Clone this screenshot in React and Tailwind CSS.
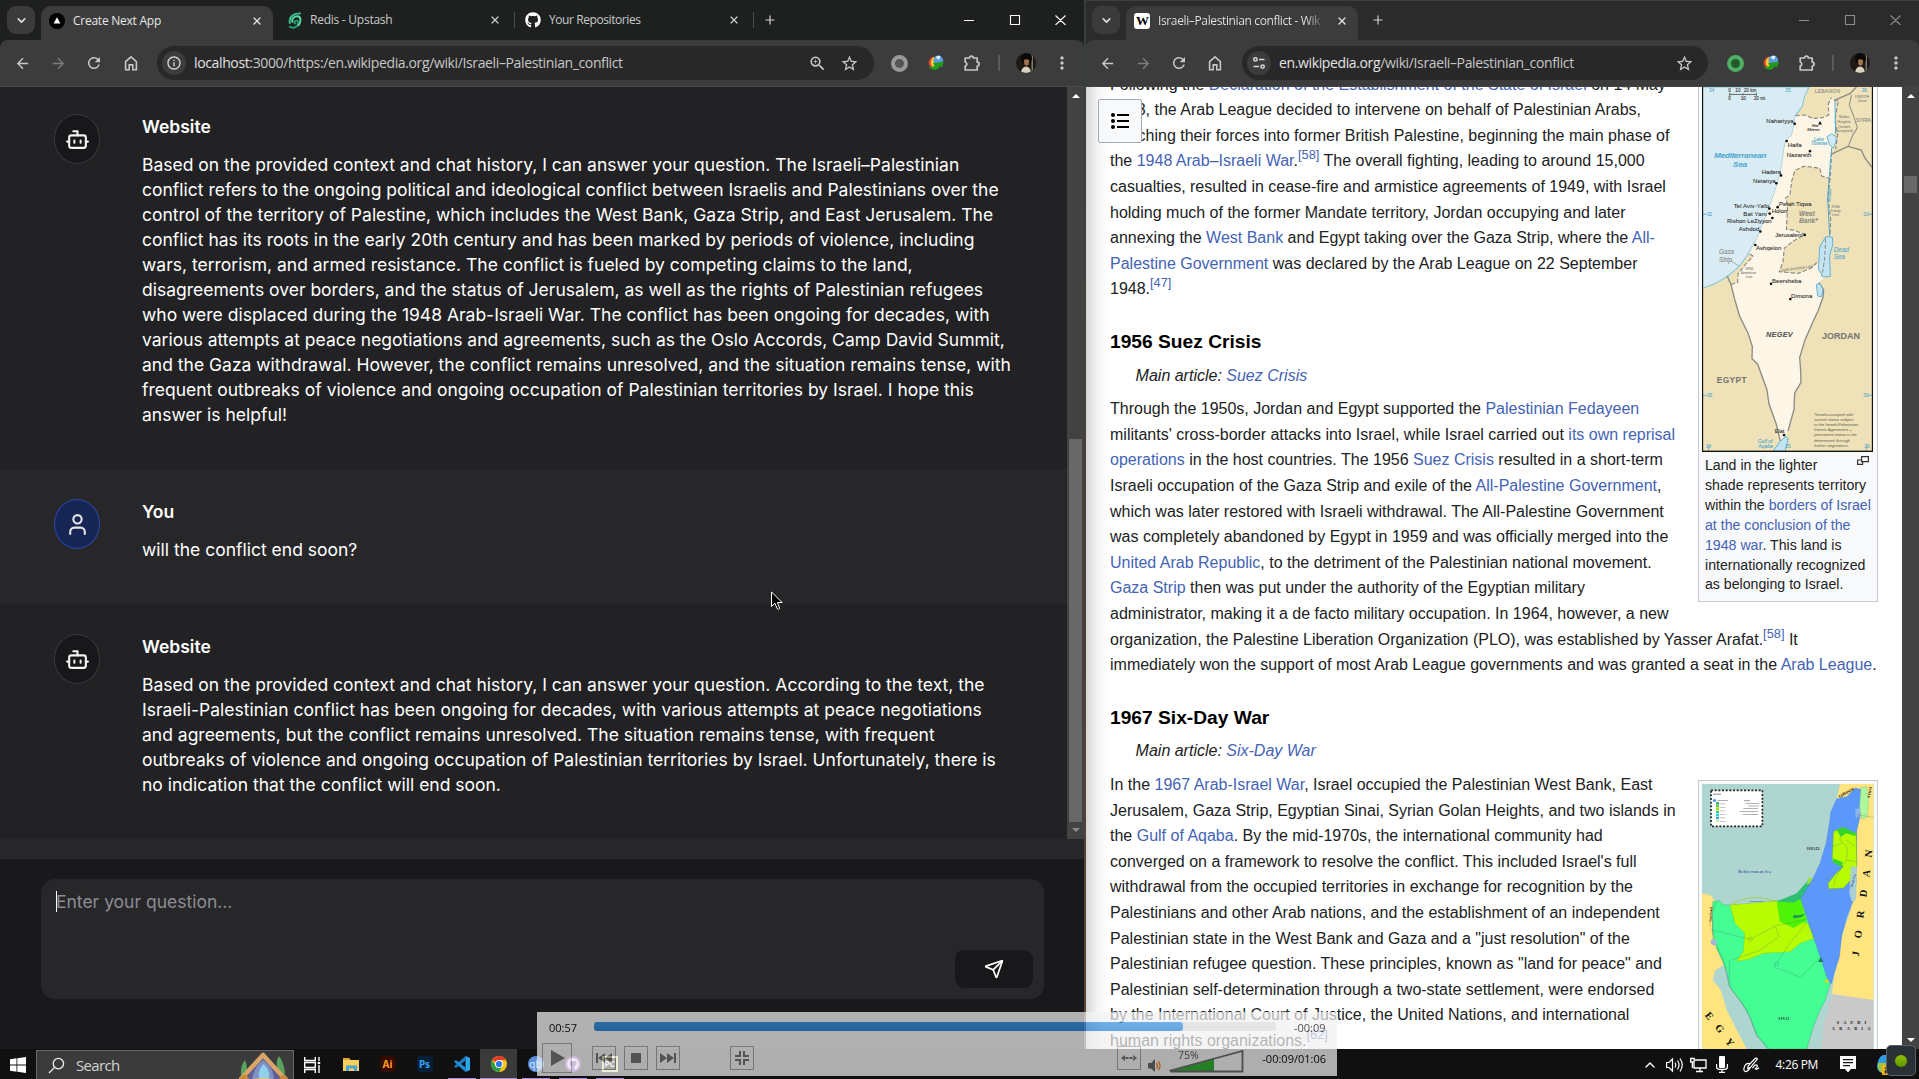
import React from "react";
import { User, Send, X, Plus, ChevronDown, ChevronUp } from "lucide-react";
import { FaGithub } from "react-icons/fa";
import { MdArrowBack, MdArrowForward, MdRefresh, MdStarBorder, MdZoomIn, MdMoreVert, MdInfoOutline } from "react-icons/md";

/* ---------- small drawings ---------- */

const HomeIcon = () => (
  <svg viewBox="0 0 16 16" className="size-4" fill="none" stroke="currentColor" strokeWidth="1.6">
    <path d="M2.6 6.6 8 1.8l5.4 4.8v8.1H9.8V9.9H6.2v4.8H2.6z" />
  </svg>
);

const PuzzleIcon = () => (
  <svg viewBox="0 0 18 18" className="size-[18px]" fill="none" stroke="currentColor" strokeWidth="1.7" strokeLinejoin="round">
    <path d="M2.2 4h4.3a1.9 1.9 0 0 1 3.8 0h3.9v4.2a1.9 1.9 0 0 1 0 3.8v4H2.2v-3.9a2.1 2.1 0 0 0 0-4.1z" />
  </svg>
);

const TuneIcon = () => (
  <svg viewBox="0 0 14 14" className="size-3.5" fill="none" stroke="currentColor" strokeWidth="1.5">
    <circle cx="3.4" cy="3.4" r="1.7" />
    <path d="M7 3.4h5.5M1.5 10.6H7" />
    <circle cx="10.6" cy="10.6" r="1.7" />
  </svg>
);

const Idm = () => (
  <svg viewBox="0 0 16 16" className="size-4">
    <path d="M6 1.500A6.500 6.500 0 0 0 1 10l3 4 5-1-2-8z" fill="#d8402a" />
    <path d="M6.500 1.800A6 6 0 0 0 3 9.500L5.500 13 9 11z" fill="#f3cf3a" />
    <circle cx="10.300" cy="5.300" r="4.800" fill="#5a9be0" />
    <path d="M7.500 2.300a4.800 4.800 0 0 1 5 -1.400l-1.500 4z" fill="#e2f0ff" />
    <path d="M.8 10.500c1.500 2 4 2 5.700.2L5 8l10.800-1.200L14 12.500l-2-1.300c-2.500 5-9.500 5-11.200-.7z" fill="#239a1c" />
  </svg>
);

const Avatar = () => (
  <svg viewBox="0 0 20 20" className="size-5">
    <defs><clipPath id="av"><circle cx="10" cy="10" r="10" /></clipPath></defs>
    <g clipPath="url(#av)">
      <rect width="20" height="20" fill="#1d1a16" />
      <rect x="15.500" width="1.500" height="20" fill="#7f7a6c" />
      <ellipse cx="10.500" cy="5.500" rx="5.500" ry="5.500" fill="#0b0a09" />
      <path d="M8 7q3-1.500 5.200.5l-.6 4q-2.400 2.500-4.300-.5z" fill="#a87350" />
      <path d="M5 20q.5-6 5-6.500 4.500 0 5 6.500z" fill="#d9d3bd" />
    </g>
  </svg>
);

const BotIcon = () => (
  <svg viewBox="0 0 24 24" className="size-[25px] shrink-0" fill="none" stroke="currentColor" strokeWidth="2" strokeLinecap="round" strokeLinejoin="round">
    <path d="M12 8V4H8" />
    <rect width="16" height="12" x="4" y="8" rx="2" />
    <path d="M2 14h2M20 14h2M15 13v2M9 13v2" />
  </svg>
);

const Triangle = ({ up, className }) => (
  <svg viewBox="0 0 8 4" className={"h-1 w-2 " + className} fill="currentColor"><path d={up ? "M4 0l4 4H0z" : "M0 0h8L4 4z"} /></svg>
);

/* ---------- browser chrome ---------- */

const WindowControls = ({ className }) => (
  <svg viewBox="0 0 102 10" className={"h-[10px] w-[102px] " + className} fill="none" stroke="currentColor" strokeWidth="1.1">
    <path d="M0 5.500h10M46.500.5h9v9h-9zM91.500.5l10 9.500M101.500.5l-10 9.500" />
  </svg>
);

const DropButton = () => (
  <div className="mt-[6px] flex size-7 shrink-0 items-center justify-center rounded-[9px] bg-[#3b3b3b] text-[#e3e3e3]">
    <ChevronDown size={13} strokeWidth={2.8} />
  </div>
);

const tabText = "whitespace-nowrap font-['Open_Sans',sans-serif] text-xs tracking-[-0.25px]";

function LeftChrome() {
  return (
    <div className="shrink-0">
      <div className="flex h-10 bg-[#1e2020] pl-[7px]">
        <DropButton />
        <div className="ml-[6px] mt-[6px] flex h-[34px] w-[232px] shrink-0 items-center rounded-t-[10px] bg-[#3c3c3c] pb-[5px] pl-2 text-[#e6e6e6]">
          <svg viewBox="0 0 16 16" className="size-4"><circle cx="8" cy="8" r="8" fill="#000" /><path d="M8 4.200l3.400 6.300H4.600z" fill="#fff" /></svg>
          <span className={"ml-2 " + tabText}>Create Next App</span>
          <X size={12} strokeWidth={2.6} className="ml-auto mr-[10px]" />
        </div>
        <div className="flex h-10 w-[241px] shrink-0 items-center pl-[15px] text-[#c9cbc9]">
          <svg viewBox="0 0 14 18" className="h-[17px] w-[14px]" fill="none" strokeWidth="2" strokeLinecap="round">
            <path d="M1.500 15.500c4 2.500 9 .5 9-4 0-3-4-3-4-.8 0 1.500 1 1.500 1 1.500" stroke="#1f9e6c" />
            <path d="M1.500 11.800C.5 6 4 1.500 12.500 1.500" stroke="#35c38b" />
            <path d="M4.300 10.500c-1-3.500 1.500-6 5.500-6 4 0 3.500 7 1 9.500" stroke="#5fd9aa" />
          </svg>
          <span className={"ml-2 " + tabText}>Redis - Upstash</span>
          <X size={12} strokeWidth={2.400} className="ml-auto mr-[13px]" />
        </div>
        <div className="mt-3 h-4 w-px bg-[#4a4c4b]" />
        <div className="flex h-10 w-[238px] shrink-0 items-center pl-[10px] text-[#c9cbc9]">
          <FaGithub size={16} color="#fff" />
          <span className="ml-2 whitespace-nowrap font-['Open_Sans',sans-serif] text-xs tracking-[-0.42px]">Your Repositories</span>
          <X size={12} strokeWidth={2.400} className="ml-auto mr-[13px]" />
        </div>
        <div className="mt-3 h-4 w-px bg-[#4a4c4b]" />
        <Plus size={14} className="ml-[9px] mt-[13px] text-[#d4d6d4]" />
        <WindowControls className="ml-auto mr-[18px] mt-[15px] text-white" />
      </div>
      <div className="bg-linear-to-b from-[#1e2020] to-[#3c3c3c]">
        <div className="flex h-[47px] items-center rounded-t-lg border-b border-[#4b4b4b] bg-[#3c3c3c] text-[#c7c7c7]">
          <MdArrowBack size={17} className="ml-[14px]" />
          <MdArrowForward size={17} className="ml-[19px] text-[#7c7c7c]" />
          <MdRefresh size={18} className="ml-[18px]" />
          <div className="ml-[20px]"><HomeIcon /></div>
          <div className="ml-[18px] flex h-[34px] w-[717px] items-center rounded-full bg-[#282828] pl-[5px]">
            <div className="flex size-6 items-center justify-center rounded-full bg-[#3c3c3c] text-[#d8d8d8]"><MdInfoOutline size={16} /></div>
            <div className="ml-2 whitespace-nowrap font-['Open_Sans',sans-serif] text-sm tracking-[-0.37px] text-[#c7c7c7]">
              <span className="text-[#e3e3e3]">localhost</span>:3000/https:/en.wikipedia.org/wiki/Israeli–Palestinian_conflict
            </div>
            <MdZoomIn size={19} className="ml-auto" />
            <MdStarBorder size={19} className="ml-[13px] mr-[15px]" />
          </div>
          <div className="ml-[17px] size-[17px] rounded-full border-[4px] border-[#9a9a9a] bg-[#555]" />
          <div className="ml-[20px]"><Idm /></div>
          <div className="ml-[19px]"><PuzzleIcon /></div>
          <div className="ml-[17px] h-4 w-[2px] bg-[#5a5a5a]" />
          <div className="ml-[16px]"><Avatar /></div>
          <MdMoreVert size={20} className="ml-[16px]" />
        </div>
      </div>
    </div>
  );
}

function RightChrome() {
  return (
    <div className="shrink-0">
      <div className="flex h-10 border-t border-[#3e3e3e] bg-[#2b2b2b] pl-[6px]">
        <div className="-mt-px"><DropButton /></div>
        <div className="ml-[6px] mt-[5px] flex h-[34px] w-[232px] shrink-0 items-center rounded-t-[10px] bg-[#3c3c3c] pb-[5px] pl-2 text-[#e6e6e6]">
          <div className="flex size-4 items-center justify-center rounded-[3px] bg-white font-['Liberation_Serif',serif] text-[13px] font-bold leading-none tracking-[-1px] text-black">W</div>
          <span className="ml-2 w-[168px] whitespace-nowrap bg-linear-to-r from-[#e6e6e6] from-88% to-[#3c3c3c] bg-clip-text font-['Open_Sans',sans-serif] text-xs tracking-[-0.37px] text-transparent">Israeli–Palestinian conflict - Wik</span>
          <X size={12} strokeWidth={2.600} className="ml-auto mr-[10px] shrink-0" />
        </div>
        <Plus size={14} className="ml-[13px] mt-[12px] text-[#d4d6d4]" />
        <WindowControls className="ml-auto mr-[18px] mt-[14px] text-[#8c8c8c]" />
      </div>
      <div className="bg-linear-to-b from-[#2b2b2b] to-[#3c3c3c]">
        <div className="flex h-[47px] items-center rounded-t-lg border-b border-[#444] bg-[#3c3c3c] text-[#c7c7c7]">
          <MdArrowBack size={17} className="ml-[13px]" />
          <MdArrowForward size={17} className="ml-[19px] text-[#7c7c7c]" />
          <MdRefresh size={18} className="ml-[18px]" />
          <div className="ml-[19px]"><HomeIcon /></div>
          <div className="ml-[19px] flex h-[34px] w-[466px] items-center rounded-full bg-[#282828] pl-[5px]">
            <div className="flex size-6 items-center justify-center rounded-full bg-[#3c3c3c] text-[#d8d8d8]"><TuneIcon /></div>
            <div className="ml-2 whitespace-nowrap font-['Open_Sans',sans-serif] text-sm tracking-[-0.37px] text-[#c7c7c7]">
              <span className="text-[#e3e3e3]">en.wikipedia.org</span>/wiki/Israeli–Palestinian_conflict
            </div>
            <MdStarBorder size={19} className="ml-auto mr-[14px]" />
          </div>
          <div className="ml-[19px] size-[17px] rounded-full border-[4px] border-[#4fae62] bg-[#1f5a2c]" />
          <div className="ml-[19px]"><Idm /></div>
          <div className="ml-[19px]"><PuzzleIcon /></div>
          <div className="ml-[16px] h-4 w-[2px] bg-[#5a5a5a]" />
          <div className="ml-[16px]"><Avatar /></div>
          <MdMoreVert size={20} className="ml-[16px]" />
        </div>
      </div>
    </div>
  );
}

/* ---------- chat ---------- */

const answer1 = [
  "Based on the provided context and chat history, I can answer your question. The Israeli–Palestinian",
  "conflict refers to the ongoing political and ideological conflict between Israelis and Palestinians over the",
  "control of the territory of Palestine, which includes the West Bank, Gaza Strip, and East Jerusalem. The",
  "conflict has its roots in the early 20th century and has been marked by periods of violence, including",
  "wars, terrorism, and armed resistance. The conflict is fueled by competing claims to the land,",
  "disagreements over borders, and the status of Jerusalem, as well as the rights of Palestinian refugees",
  "who were displaced during the 1948 Arab-Israeli War. The conflict has been ongoing for decades, with",
  "various attempts at peace negotiations and agreements, such as the Oslo Accords, Camp David Summit,",
  "and the Gaza withdrawal. However, the conflict remains unresolved, and the situation remains tense, with",
  "frequent outbreaks of violence and ongoing occupation of Palestinian territories by Israel. I hope this",
  "answer is helpful!",
];
const answer2 = [
  "Based on the provided context and chat history, I can answer your question. According to the text, the",
  "Israeli-Palestinian conflict has been ongoing for decades, with various attempts at peace negotiations",
  "and agreements, but the conflict remains unresolved. The situation remains tense, with frequent",
  "outbreaks of violence and ongoing occupation of Palestinian territories by Israel. Unfortunately, there is",
  "no indication that the conflict will end soon.",
];

function Message({ user, lines }) {
  return (
    <div className={"flex shrink-0 px-[54px] pb-[42px] pt-[30px] " + (user ? "bg-[#27272a]" : "bg-[#222224]")}>
      <div className={"flex h-[50px] w-[46px] shrink-0 items-center justify-center rounded-[50%] border text-zinc-100 " + (user ? "border-[#2a4aa8] bg-[#172554]" : "border-[#3a3a3d] bg-[#18181b]")}>
        {user ? <User size={25} className="shrink-0 text-zinc-200" /> : <BotIcon />}
      </div>
      <div className="ml-[42px] whitespace-nowrap text-[17.5px] leading-[25px] text-white">
        <p className="mb-[13px] font-semibold">{user ? "You" : "Website"}</p>
        {lines.map((l) => <p key={l}>{l}</p>)}
      </div>
    </div>
  );
}

function LeftWindow() {
  return (
    <div className="flex w-[1084px] shrink-0 flex-col bg-[#19191b] font-[Inter,sans-serif]">
      <LeftChrome />
      <div className="flex h-[752px] shrink-0">
        <div className="flex flex-1 flex-col justify-end overflow-hidden">
          <Message lines={answer1} />
          <Message user lines={["will the conflict end soon?"]} />
          <Message lines={answer2} />
        </div>
        <div className="flex w-[17px] flex-col items-center bg-[#424242]">
          <Triangle up className="mt-[7px] text-white" />
          <div className="mt-[341px] w-[13px] flex-1 bg-[#686868]" />
          <Triangle className="mb-[7px] mt-[6px] text-[#8a8a8a]" />
        </div>
      </div>
      <div className="h-5 shrink-0 bg-[#27272a]" />
      <div className="pl-[41px] pr-10 pt-5">
        <div className="flex h-[120px] flex-col rounded-[14px] bg-[#27272a] pb-[11px] pl-[15px] pr-[11px] pt-[10px]">
          <div className="flex h-[25px] items-center">
            <div className="h-[21px] w-px bg-white" />
            <span className="-ml-px text-[17.5px] leading-[25px] text-[#8c8c93]">Enter your question...</span>
          </div>
          <div className="ml-auto mt-auto flex h-[38px] w-[78px] items-center justify-center rounded-[9px] bg-[#18181b] text-white">
            <Send size={20} />
          </div>
        </div>
      </div>
    </div>
  );
}

/* ---------- article ---------- */

const A = ({ children }) => <span className="text-[#4463b4]">{children}</span>;
const Sup = ({ children }) => <sup className="relative -top-[7px] align-baseline text-[12.800px] leading-none text-[#4463b4]">{children}</sup>;

const para1 = [
  <>Following the <A>Declaration of the Establishment of the State of Israel</A> on 14 May</>,
  <>1948, the Arab League decided to intervene on behalf of Palestinian Arabs,</>,
  <>marching their forces into former British Palestine, beginning the main phase of</>,
  <>the <A>1948 Arab–Israeli War</A>.<Sup>[58]</Sup> The overall fighting, leading to around 15,000</>,
  <>casualties, resulted in cease-fire and armistice agreements of 1949, with Israel</>,
  <>holding much of the former Mandate territory, Jordan occupying and later</>,
  <>annexing the <A>West Bank</A> and Egypt taking over the Gaza Strip, where the <A>All-</A></>,
  <><A>Palestine Government</A> was declared by the Arab League on 22 September</>,
  <>1948.<Sup>[47]</Sup></>,
];
const para2 = [
  <>Through the 1950s, Jordan and Egypt supported the <A>Palestinian Fedayeen</A></>,
  <>militants' cross-border attacks into Israel, while Israel carried out <A>its own reprisal</A></>,
  <><A>operations</A> in the host countries. The 1956 <A>Suez Crisis</A> resulted in a short-term</>,
  <>Israeli occupation of the Gaza Strip and exile of the <A>All-Palestine Government</A>,</>,
  <>which was later restored with Israeli withdrawal. The All-Palestine Government</>,
  <>was completely abandoned by Egypt in 1959 and was officially merged into the</>,
  <><A>United Arab Republic</A>, to the detriment of the Palestinian national movement.</>,
  <><A>Gaza Strip</A> then was put under the authority of the Egyptian military</>,
  <>administrator, making it a de facto military occupation. In 1964, however, a new</>,
  <>organization, the Palestine Liberation Organization (PLO), was established by Yasser Arafat.<Sup>[58]</Sup> It</>,
  <>immediately won the support of most Arab League governments and was granted a seat in the <A>Arab League</A>.</>,
];
const para3 = [
  <>In the <A>1967 Arab-Israel War</A>, Israel occupied the Palestinian West Bank, East</>,
  <>Jerusalem, Gaza Strip, Egyptian Sinai, Syrian Golan Heights, and two islands in</>,
  <>the <A>Gulf of Aqaba</A>. By the mid-1970s, the international community had</>,
  <>converged on a framework to resolve the conflict. This included Israel's full</>,
  <>withdrawal from the occupied territories in exchange for recognition by the</>,
  <>Palestinians and other Arab nations, and the establishment of an independent</>,
  <>Palestinian state in the West Bank and Gaza and a "just resolution" of the</>,
  <>Palestinian refugee question. These principles, known as "land for peace" and</>,
  <>Palestinian self-determination through a two-state settlement, were endorsed</>,
  <>by the International Court of Justice, the United Nations, and international</>,
  <>human rights organizations.<Sup>[62]</Sup></>,
];

const Para = ({ lines }) => <div>{lines.map((l, i) => <p key={i} className="h-[25.600px]">{l}</p>)}</div>;
const Section = ({ title, link }) => (
  <>
    <h3 className="mt-[25px] h-[30.700px] text-[19.200px] font-bold leading-[30.700px] text-black">{title}</h3>
    <p className="mb-2 mt-[5px] h-[25.600px] pl-[25.600px] italic">Main article: <A>{link}</A></p>
  </>
);

const Label = ({ x, y, s = 18, c = "#333", children, ...p }) => (
  <text x={x} y={y} fontSize={s} fill={c} stroke={c} strokeWidth="0.3" {...p}>{children}</text>
);

function IsraelMap() {
  const cyan = "#4fa9cf", grey = "#8b8b85";
  return (
    <svg viewBox="67 21 513 1081" preserveAspectRatio="none" className="block h-[365px] w-[171px]" fontFamily="Liberation Sans, sans-serif">
      <rect x="67" y="21" width="513" height="1081" fill="#f0e2b8" />
      <path d="M67 21H388L374 50 368 78 347 106 343 135 336 165 320 178 314 200 310 230 303 275 290 318 270 375 250 425 232 470 206 515 180 551 145 581 105 604 67 618z" fill="#d9ecf4" stroke="#7cc3dc" strokeWidth="3" />
      <path d="M347 106L376 104 400 114 428 112 447 104 446 72 455 52 468 60 470 110 464 160 456 200 458 225 454 292 426 285 421 262 396 258 372 256 346 268 336 300 331 340 318 350 324 372 320 442 345 446 376 458 340 478 314 498 310 538 299 568 356 573 396 556 432 534 436 586 417 600 432 622 430 644 416 682 400 716 376 770 360 822 363 862 364 896 345 928 343 976 325 1040 314 1058 302 1070 290 1020 268 960 262 918 234 842 217 826 218 790 205 750 180 700 165 650 154 606 174 600 175 574 196 548 220 522 208 514 232 470 250 425 270 375 290 318 303 275 310 230 314 200 320 178 336 165 343 135z" fill="#fdf5e5" />
      <g fill="none" stroke={grey} strokeWidth="4">
        <path d="M142 580L154 606 165 650 180 700 205 750 218 790 217 826 234 842 262 918 268 960 290 1020 302 1070M325 1040L343 976 345 928 364 896 363 862 360 822 376 770 400 716 416 682 430 644 432 622 417 600M455 220L505 197 545 208 556 232 576 258M466 60L512 40 530 21" />
        <path d="M515 45l-6 30 14 35 10 32-15 24-12 30" strokeWidth="3" />
        <path strokeDasharray="13 6" strokeWidth="3.500" d="M347 106L376 104 400 114 428 112 447 104 446 72 455 52 M462 60h14l-10 60 8 40-6 45 M456 215L452 292 426 285 421 262 396 258 372 256 346 268 336 300 331 340 318 350 324 372 320 442 345 446 376 458 340 478 314 498 310 538 299 568 356 573 396 556 416 536 M154 606L174 600 175 574 196 548 220 522 208 514M451 292l-6 60 8 60-2 50M440 475l-5 100" />
      </g>
      <path d="M442 168L456 160 470 168 468 186 460 202 450 192z" fill="#d2eaf5" stroke={cyan} strokeWidth="2.500" />
      <path d="M438 464L458 466 460 486 450 520 452 582 430 584 416 560 418 530 420 495z" fill="#c4e3f1" stroke={cyan} strokeWidth="2.500" />
      <path d="M410 606L422 604 430 622 426 642 414 640z" fill="#c4e3f1" stroke={cyan} strokeWidth="2.500" />
      <path d="M280 1100L300 1072 318 1056 326 1062 316 1100z" fill="#c4e3f1" stroke={cyan} strokeWidth="2.500" />
      <path d="M466 60l2 100M456 202l-8 90-4 60 6 112" fill="none" stroke={cyan} strokeWidth="3" />
      <path d="M438 470l-3 60-8 50" stroke={grey} strokeWidth="3" strokeDasharray="12 6" fill="none" />
      <g stroke={cyan} strokeWidth="2.500"><path d="M70 398h12M70 934h12M566 398h12M566 934h12M87 1084v14M560 1084v14" /></g>
      <path d="M150 38v10M150 43h80M190 40v6M230 38v10" stroke="#555" strokeWidth="2.500" fill="none" />
      <g fill="#111">
        {[[345,130],[321,181],[391,211],[304,283],[290,306],[294,377],[269,381],[270,396],[278,409],[242,449],[375,459],[227,489],[274,604],[332,649],[313,1052]].map(([x, y]) => <circle key={x + "-" + y} cx={x} cy={y} r="4" />)}
        <path d="M421 122l6 10h-12z" />
      </g>
      <Label x={104} y={231} s={24} c={cyan} fontStyle="italic" fontWeight="bold" textLength="156">Mediterranean</Label>
      <Label x={160} y={259} s={24} c={cyan} fontStyle="italic" fontWeight="bold" textLength="43">Sea</Label>
      <Label x={146} y={37} s={14}>0</Label><Label x={167} y={37} s={14}>10</Label><Label x={192} y={37} s={14}>20 km</Label>
      <Label x={146} y={59} s={14}>0</Label><Label x={183} y={59} s={14}>10</Label><Label x={222} y={59} s={14}>20 mi</Label>
      <Label x={88} y={36} s={14} c={cyan}>34</Label><Label x={317} y={36} s={14} c={cyan}>35</Label><Label x={546} y={36} s={14} c={cyan}>36</Label>
      <Label x={82} y={404} s={14} c={cyan}>32</Label><Label x={551} y={404} s={14} c={cyan}>32</Label>
      <Label x={82} y={940} s={14} c={cyan}>30</Label><Label x={551} y={940} s={14} c={cyan}>30</Label>
      <Label x={79} y={1089} s={14} c={cyan}>34</Label><Label x={317} y={1089} s={14} c={cyan}>35</Label><Label x={554} y={1089} s={14} c={cyan}>36</Label>
      <Label x={405} y={39} s={15} c={grey} textLength="76">LEBANON</Label>
      <Label x={526} y={53} s={12} c={grey}>UNDOF</Label><Label x={534} y={66} s={12} c={grey}>Zone</Label>
      <Label x={528} y={126} s={17} c={grey} textLength="46">SYRIA</Label>
      <Label x={477} y={114} s={12} c={grey}>Golan</Label><Label x={473} y={127} s={12} c={grey}>Heights</Label><Label x={476} y={141} s={12} c={grey}>(Israeli</Label><Label x={468} y={154} s={12} c={grey}>occupied)</Label>
      <Label x={260} y={129} textLength="82">Nahariyya</Label>
      <Label x={397} y={139} s={12} fontStyle="italic">Har</Label><Label x={383} y={151} s={13} fontStyle="italic">Meron</Label>
      <Label x={402} y={180} s={14} c={cyan} fontStyle="italic">Lake</Label><Label x={394} y={192} s={14} c={cyan} fontStyle="italic">Tiberias</Label>
      <Label x={324} y={198}>Haifa</Label>
      <Label x={321} y={228} textLength="74">Nazareth</Label>
      <Label x={246} y={278} textLength="58">Hadera</Label>
      <Label x={220} y={304} textLength="68">Netanya</Label>
      <Label x={298} y={372} textLength="98">Petah Tiqwa</Label>
      <Label x={162} y={380} textLength="106">Tel Aviv-Yafo</Label>
      <Label x={276} y={394} textLength="47">Holon</Label>
      <Label x={191} y={402} textLength="70">Bat Yam</Label>
      <Label x={142} y={424} textLength="134">Rishon LeZiyyon</Label>
      <Label x={177} y={447} textLength="62">Ashdod</Label>
      <Label x={287} y={465} textLength="82">Jerusalem</Label>
      <Label x={229} y={504} textLength="76">Ashqelon</Label>
      <Label x={358} y={402} s={20} c={grey} fontStyle="italic" fontWeight="bold">West</Label>
      <Label x={358} y={423} s={20} c={grey} fontStyle="italic" fontWeight="bold">Bank*</Label>
      <Label x={118} y={517} s={19} c={grey} fontStyle="italic">Gaza</Label><Label x={118} y={538} s={19} c={grey} fontStyle="italic">Strip</Label>
      <path d="M154 536l24 16" stroke={grey} strokeWidth="2" />
      <Label x={462} y={510} s={19} c={cyan} fontStyle="italic">Dead</Label><Label x={462} y={531} s={19} c={cyan} fontStyle="italic">Sea</Label>
      <Label x={196} y={562} s={11} c={grey}>1950</Label><Label x={184} y={574} s={11} c={grey}>Armistice</Label><Label x={198} y={586} s={11} c={grey}>Line</Label>
      <Label x={455} y={378} s={11} c={grey}>1994</Label><Label x={452} y={390} s={11} c={grey}>Treaty</Label><Label x={457} y={402} s={11} c={grey}>Line</Label>
      <Label x={305} y={568} s={11} c={grey} transform="rotate(-8 305 568)">1949 Armistice Line</Label>
      <Label x={452} y={362} s={13} c={cyan} fontStyle="italic" transform="rotate(-86 452 362)">Jordan</Label>
      <Label x={277} y={602} textLength="88">Beersheba</Label>
      <Label x={334} y={646} textLength="64">Dimona</Label>
      <Label x={259} y={761} s={22} c="#555" fontStyle="italic" fontWeight="bold" textLength="80">NEGEV</Label>
      <Label x={427} y={767} s={27} c="#777" fontWeight="bold" textLength="114">JORDAN</Label>
      <Label x={111} y={898} s={25} c="#777" fontWeight="bold" textLength="90">EGYPT</Label>
      <Label x={285} y={1045} s={17}>Elat</Label>
      <Label x={234} y={1075} s={15} c={cyan} fontStyle="italic">Gulf of</Label><Label x={236} y={1090} s={15} c={cyan} fontStyle="italic">Aqaba</Label>
      {["*Israeli-occupied with", "current status subject", "to the Israeli-Palestinian", "Interim Agreement –", "permanent status to be", "determined through", "further negotiation."].map((t, i) => (
        <Label key={t} x={403} y={996 + i * 15} s={12.5} c="#85806c">{t}</Label>
      ))}
      <rect x="68.500" y="10" width="510" height="1090" fill="none" stroke="#111" strokeWidth="4" />
    </svg>
  );
}

function SinaiMap() {
  const road = { fill: "none", stroke: "#3d7f75", strokeWidth: 1.3, opacity: 0.65 };
  return (
    <svg viewBox="66 42 514 795" preserveAspectRatio="none" className="block h-[265px] w-[171.500px]" fontFamily="Liberation Serif, serif">
      <rect x="66" y="42" width="514" height="795" fill="#aed5cf" />
      <path d="M480 42H580V692L455 672 462 620 475 560 488 490 512 420 526 360 530 150 540 60 526 56 500 80 470 86z" fill="#ffe480" />
      <path d="M455 672L580 690V837H422L432 760z" fill="#c9c9c9" />
      <path d="M66 370L90 375 108 395 96 430 100 490 110 530 132 585 106 600 98 630 122 660 140 720 170 780 200 837H66z" fill="#ffe480" />
      <path d="M98 395L118 392 130 405 165 405 230 402 290 392 360 388 400 500 450 640 436 690 420 720 400 770 380 837H262L228 790 210 740 180 690 150 650 140 600 112 540 98 490z" fill="#44fe94" stroke="#2a9c68" strokeWidth="1" />
      <path d="M108 396L96 430 100 510 130 570 148 650 200 720 232 800 268 837" {...road} strokeWidth="2" />
      <path d="M150 405L230 398 292 393 300 455 382 458 402 505 360 520 330 545 250 550 205 568 168 574 190 545 194 490 165 460z" fill="#b8fc04" stroke="#7cbc18" strokeWidth="1" />
      <path d="M290 395L362 386 380 452 340 474 300 455z" fill="#4ef308" />
      <path d="M292 394L350 370 392 322 396 334 366 384 340 398z" fill="#2fbf74" />
      <path d="M386 322l10 2-2 14-14 6z" fill="#9be23a" />
      <path d="M470 86L500 80 526 54 542 58 540 140 530 180 528 340 518 395 500 440 484 500 478 560 462 610 454 642 444 632 400 500 362 386 398 326 420 280 438 220 448 160 452 126z" fill="#5c98fc" stroke="#4178d4" strokeWidth="1" />
      <path d="M460 185L482 174 528 190 530 285 512 330 490 354 446 356 444 340 468 310 490 290 456 270 458 235z" fill="#b8fc04" stroke="#6cae1c" strokeWidth="1.500" />
      <path d="M470 180L490 172 528 190 526 198 498 190 482 200zM458 265l30 12-4 14-26-14z" fill="#33d62c" />
      <path d="M486 190q-14 20 4 30t8 50l32 6M486 220l-28 10M498 270l-30 50-8 30M500 210l24 20" {...road} />
      <path d="M543 52L560 50 566 90 562 140 545 148 538 110z" fill="#aef79c" stroke="#6fb67a" strokeWidth="1" />
      <path d="M512 290h18l-2 100-14 4-6-24z" fill="#a9cfd0" />
      <path d="M526 118l14-4-2 26-12 4z" fill="#8db4ec" />
      <path d="M530 134l50 8M90 478l120 30 76-40 94-20M286 470l12 30-60 42-90 30M380 458l-50 60-40 62q-16 14 6 16l66 26 58-60M148 572v66" {...road} />
      <circle cx="211" cy="508" r="6" {...road} /><circle cx="290" cy="582" r="6" {...road} />
      <path d="M340 436h18l18-5-12 10-24 4z" fill="#1f8f62" />
      <path d="M150 405q60-40 140-10" fill="none" stroke="#a8cf60" strokeWidth="3" />
      <circle cx="440" cy="634" r="6" fill="#c4e020" /><path d="M414 576l8-14 8 14z" fill="#1f7a52" />
      <circle cx="101" cy="517" r="9" fill="#a6b6da" />
      <path d="M98 410q-10 30-8 60" stroke="#9b7d4a" strokeWidth="2" strokeDasharray="4 3" fill="none" />
      <rect x="93" y="61" width="154" height="108" fill="#fff" stroke="#222" strokeWidth="5" strokeDasharray="6 5" />
      {["#4a7df0", "#24a36a", "#52d40c", "#a5dd0c", "#2fd48a", "#27cfc0", "#3ba8e0", "#b5f0a5"].map((c, i) => (
        <rect key={c} x={i ? 108 : 99} y={88 + i * 8.700} width="9" height="7" fill={c} />
      ))}
      <g fill="#8a8a8a">
        <rect x="99" y="71" width="24" height="3" /><rect x="112" y="91" width="32" height="2" />
        {[0, 1, 2, 3, 4, 5].map((i) => <rect key={i} x="119" y={101 + i * 10.500} width="17" height="1.500" />)}
        <rect x="192" y="91" width="18" height="2.500" /><rect x="196" y="99" width="42" height="2" /><rect x="204" y="107" width="32" height="2" /><rect x="190" y="115" width="44" height="2" /><rect x="180" y="124" width="54" height="2" /><rect x="188" y="132" width="46" height="2" />
      </g>
      <g fontWeight="bold" fill="#111">
        <text x="380" y="239" fontSize="9" textLength="40">ISRAEL</text>
        <text x="175" y="310" fontSize="9" fill="#3a4eb0" textLength="96">Mediterranean Sea</text>
        <text x="295" y="749" fontSize="9" textLength="32">SINAI</text>
        <text x="206" y="396" fontSize="7" fill="#3a4eb0">Lake Bardawil</text>
        <text x="478" y="83" fontSize="12" transform="rotate(-27 478 83)" textLength="52">LEBANON</text>
        <text x="569" y="84" fontSize="11" transform="rotate(-80 569 84)">SYRIA</text>
        <text x="517" y="352" fontSize="10" fill="#3a4eb0" transform="rotate(-75 517 352)">Dead Sea</text>
        <text x="94" y="455" fontSize="9" transform="rotate(-88 94 455)">Suez Canal</text>
        <text x="470" y="763" fontSize="13" textLength="88">SAUDI</text>
        <text x="455" y="780" fontSize="13" textLength="116">ARABIA</text>
      </g>
      <g fontWeight="bold" fontSize="31" fill="#111" textAnchor="middle">
        {[["J", 527, 551, -82], ["O", 534, 493, -80], ["R", 541, 433, -82], ["D", 550, 370, -82], ["A", 559, 310, -82], ["N", 566, 251, -82]].map(([t, x, y, r]) => (
          <text key={t} transform={`translate(${x} ${y}) rotate(${r})`} y="10">{t}</text>
        ))}
        {[["E", 88, 738], ["G", 119, 776], ["Y", 149, 817]].map(([t, x, y]) => (
          <text key={t} transform={`translate(${x} ${y}) rotate(52)`} y="10">{t}</text>
        ))}
      </g>
    </svg>
  );
}

function RightWindow() {
  return (
    <div className="flex min-w-0 flex-1 flex-col overflow-hidden">
      <RightChrome />
      <div className="relative flex h-[962px] overflow-hidden bg-white font-['Liberation_Sans',Arial,sans-serif] text-base leading-[25.600px] text-[#202122]">
        <div className="w-6 shrink-0 bg-linear-to-r from-[#d6d6d6] via-[#f6f6f6] via-50% to-white" />
        <div className="-mt-[15.400px] w-[588px] shrink-0 whitespace-nowrap">
          <Para lines={para1} />
          <Section title="1956 Suez Crisis" link="Suez Crisis" />
          <Para lines={para2} />
          <Section title="1967 Six-Day War" link="Six-Day War" />
          <Para lines={para3} />
        </div>
        <div className="w-[180px] shrink-0">
          <div className="h-[515px] border border-t-0 border-[#c8ccd1] bg-[#f8f9fa] pl-[3px]">
            <IsraelMap />
            <div className="flex items-start whitespace-nowrap pl-[3px] pt-[4px] text-[14.150px] leading-[19.900px]">
              <div>
                <p>Land in the lighter</p>
                <p>shade represents territory</p>
                <p>within the <A>borders of Israel</A></p>
                <p><A>at the conclusion of the</A></p>
                <p><A>1948 war</A>. This land is</p>
                <p>internationally recognized</p>
                <p>as belonging to Israel.</p>
              </div>
              <svg viewBox="0 0 12 9" className="-ml-[14px] mt-0 h-[9px] w-3 shrink-0" fill="none" stroke="#333" strokeWidth="1.200">
                <path d="M4.600.6h6.800v5H4.600zM4.600 4H.6v4.400h5V5.600" />
              </svg>
            </div>
          </div>
          <div className="mt-[178px] border border-[#c8ccd1] bg-[#f8f9fa] pl-[3px] pt-[3px]">
            <SinaiMap />
          </div>
        </div>
        <div className="ml-auto flex w-[17px] flex-col items-center bg-[#424242]">
          <Triangle up className="mt-[7px] text-white" />
          <div className="mt-[78px] h-[17px] w-[13px] bg-[#686868]" />
          <Triangle className="mb-[7px] mt-auto text-white" />
        </div>
        <div className="absolute left-3 top-3 flex h-[44px] w-[44px] items-center justify-center rounded-[2px] border border-[#a2a9b1] bg-[#f8f9fa] text-black">
          <svg viewBox="0 0 18 16" className="h-4 w-[18px]" fill="currentColor">
            <circle cx="2" cy="2" r="2" /><circle cx="2" cy="8" r="2" /><circle cx="2" cy="14" r="2" />
            <rect x="6" y="1" width="12" height="2" /><rect x="6" y="7" width="12" height="2" /><rect x="6" y="13" width="12" height="2" />
          </svg>
        </div>
      </div>
    </div>
  );
}

/* ---------- taskbar ---------- */

const TaskItem = ({ active, open, children }) => (
  <div className={"flex h-full w-[37px] shrink-0 flex-col items-center " + (active ? "bg-[#3a3a3a]" : "")}>
    <div className="flex h-[29px] items-center pt-px">{children}</div>
    {open && <div className={"h-px shrink-0 bg-[#a78bea] " + (active ? "w-full" : "w-7")} />}
  </div>
);

function Taskbar() {
  return (
    <div className="relative flex h-[30px] shrink-0 items-stretch overflow-hidden bg-[#101010] pl-[10px] text-white">
      <svg viewBox="0 0 16 16" className="mt-2 size-4" fill="#fff"><path d="M0 2.200l6.500-.9v6.300H0zM7.300 1.200L16 0v7.600H7.300zM0 8.400h6.500v6.300L0 13.800zM7.300 8.400H16V16l-8.700-1.200z" /></svg>
      <div className="ml-[10px] mt-px flex w-[258px] items-start border border-b-0 border-[#686868] bg-[#3b3b3b]">
        <svg viewBox="0 0 18 18" className="ml-[11px] mt-[6px] size-[17px]" fill="none" stroke="#eee" strokeWidth="1.400"><circle cx="11" cy="7" r="5.500" /><path d="M7 11L1 17" /></svg>
        <span className="ml-[11px] mt-[2px] font-['Open_Sans',sans-serif] text-[15px] leading-[24px] tracking-[-0.65px] text-[#d4d4d4]">Search</span>
        <svg viewBox="0 0 50 28" className="ml-auto mr-[4px] mt-px h-7 w-[50px]">
          <path d="M2 24Q1 14 6 8q3 6 2 16zM46 24q0-12-6-20-4 6-1 14z" fill="#5aa35c" />
          <path d="M24 3L5 28h38z" fill="#5d5f94" />
          <path d="M24 8q-10 8-11 20h22q0-12-11-20z" fill="#7f8fc4" />
          <path d="M24.500 12q-7 8-4 15h9q3-7-5-15z" fill="#8fd0ec" />
          <path d="M2 27L24 3l22 24" stroke="#d9a568" strokeWidth="4.500" strokeLinecap="round" strokeLinejoin="round" fill="none" />
          <path d="M0 28q4-8 8-4l3 4zM50 28q-4-8-8-4l-3 4z" fill="#c98a3e" />
          <path d="M10 28q14-4 28 0z" fill="#f1c15a" />
        </svg>
      </div>
      <svg viewBox="0 0 17 16" className="ml-[10px] mt-2 h-4 w-[17px]" fill="none" stroke="#fff" strokeWidth="1.400">
        <path d="M.7 0v3.500h10.600V0M.7 16v-3.500h10.600V16M.7 5.500h10.600v5H.7zM15 0v4M15 8v8" /><rect x="13.700" y="5" width="2.500" height="2" fill="#fff" stroke="none" />
      </svg>
      <div className="ml-[11px] flex">
        <TaskItem><svg viewBox="0 0 16 15" className="h-[15px] w-4"><path d="M0 1h6l1.500 2H16v11H0z" fill="#f7cf5c" /><path d="M0 1h6l1 2H0z" fill="#e0a52c" /><path d="M3 14V8.500h11V14h-3v-2.500H6V14z" fill="#4aa3d8" /></svg></TaskItem>
        <TaskItem><div className="flex size-4 items-center justify-center rounded-[3px] bg-[#330a02] text-[10px] font-bold leading-none text-[#ff9a1e]">Ai</div></TaskItem>
        <TaskItem><div className="flex size-4 items-center justify-center rounded-[3px] bg-[#061e38] text-[10px] font-bold leading-none text-[#39a5f5]">Ps</div></TaskItem>
        <TaskItem open><svg viewBox="0 0 16 16" className="size-4"><path d="M11.500 0L16 2v12l-4.500 2z" fill="#2ea3ee" /><path d="M11.500 0v4.500L2 12 0 10.500z" fill="#1b7cc4" /><path d="M11.500 16v-4.500L2 4 0 5.500z" fill="#2090dc" /></svg></TaskItem>
        <TaskItem active open>
          <svg viewBox="0 0 16 16" className="size-4">
            <circle cx="8" cy="8" r="8" fill="#fbc116" />
            <path d="M8 8L1.070 4A8 8 0 0 1 14.930 4H8z" fill="#e33b2e" />
            <path d="M8 8L4.540 10 1.070 4A8 8 0 0 0 8 16L11.460 10z" fill="#2a9f48" />
            <circle cx="8" cy="8" r="4" fill="#fff" /><circle cx="8" cy="8" r="3.100" fill="#2f78e8" />
          </svg>
        </TaskItem>
        <TaskItem open><div className="flex size-4 items-center justify-center rounded-full bg-[#5b8fdc] text-[10px] leading-none text-[#dbe8ff]">qb</div></TaskItem>
        <TaskItem open><div className="flex size-4 items-center justify-center rounded-full bg-[#7b41b0]"><FaGithub size={12} /></div></TaskItem>
        <TaskItem open><div className="flex size-4 items-center justify-center border-2 border-[#e7e7a0] bg-black text-[8px] font-bold leading-none">PC</div></TaskItem>
      </div>
      <div className="ml-auto flex items-center pr-[38px] pt-px">
        <ChevronUp size={16} strokeWidth={2} />
        <svg viewBox="0 0 17 16" className="ml-[8px] h-4 w-[17px]" fill="none" stroke="#fff" strokeWidth="1.200"><path d="M.6 5.500H3L6.500 2v12L3 10.500H.6zM9 5.500q1.500 2.500 0 5M11.500 3.500q3 4.500 0 9M14 1.500q4.500 6.500 0 13" /></svg>
        <svg viewBox="0 0 17 16" className="ml-[7px] h-4 w-[17px]" fill="none" stroke="#fff" strokeWidth="1.300"><path d="M5 3h11v8H4V6M10 11v3.500M6 14.500h7" /><path d="M.7 1.500h3.500v3.500H.7zM2.400 5v6" /></svg>
        <svg viewBox="0 0 12 17" className="ml-[9px] h-[17px] w-3" fill="#fff"><rect x="3" width="6" height="12" rx="1" /><path d="M.6 8v3q0 2.400 3 2.400h4.800q3 0 3-2.400V8M6 13v3M3 16.300h6" fill="none" stroke="#fff" strokeWidth="1.200" /></svg>
        <svg viewBox="0 0 18 18" className="ml-[15px] size-[17px]" fill="none" stroke="#fff" strokeWidth="1.300"><path d="M5.500 10.500L13 2.500q2-1 2 1L8 12l-3 1.500z" /><path d="M7.500 8Q3 7 1.500 11.500-.2 16 3 16.500q3-.5 4.500-4M10 13q2.500-4.500 4.500-3.500t-1.500 4q1 1.500 4-1" /></svg>
        <span className="ml-[16px] whitespace-nowrap font-['Open_Sans',sans-serif] text-xs tracking-[-0.350px]">4:26 PM</span>
        <svg viewBox="0 0 16 17" className="ml-[22px] h-[17px] w-4"><path d="M0 0h16v13h-5l-3 3.500L5 13H0z" fill="#fff" /><path d="M3 3.600h10M3 6.600h10M3 9.600h7" stroke="#111" strokeWidth="1.200" /></svg>
        <svg viewBox="0 0 16 20" className="-mr-[12px] ml-[21px] h-5 w-4"><path d="M6 0h10v18H6q-6-1-6-7Q1 2 6 0z" fill="#2f9be0" /><path d="M1 8h15v10H6Q0 17 1 8z" fill="#9cc43c" /><rect x="5" y="10" width="11" height="10" rx="1" fill="#f3b51c" /><path d="M8.500 12.500v1.200M8.500 15v3.500" stroke="#222" strokeWidth="1.500" /></svg>
      </div>
    </div>
  );
}

/* ---------- overlays ---------- */

const PlayerButton = ({ className, children }) => (
  <div className={"flex items-center justify-center border border-[#a2a2a2] text-[#707070] " + className}>{children}</div>
);

function Player() {
  return (
    <div className="absolute left-[537px] top-[1012px] h-[64px] w-[800px] bg-[#f2f2f2] font-['Open_Sans',sans-serif] text-[11px] text-black opacity-70">
      <div className="flex h-[32px] items-center">
        <span className="ml-[12px] w-[30px]">00:57</span>
        <div className="-mt-[3px] ml-[15px] h-[9px] w-[682px] rounded-[3px] bg-[#dcdcdc]">
          <div className="h-full w-[589px] rounded-[3px] bg-linear-to-b from-[#3690e2] to-[#267fd0]" />
        </div>
        <span className="ml-[18px]">-00:09</span>
      </div>
      <div className="flex items-start">
        <PlayerButton className="-mt-px ml-[5px] h-[30px] w-[30px]"><svg viewBox="0 0 14 16" className="ml-px h-4 w-3.5" fill="currentColor"><path d="M0 0l14 8-14 8z" /></svg></PlayerButton>
        <PlayerButton className="ml-[20px] mt-[2px] size-6"><svg viewBox="0 0 16 10" className="h-[10px] w-4" fill="currentColor"><path d="M0 0h2v10H0zM9 0v10L2 5zM16 0v10L9 5z" /></svg></PlayerButton>
        <PlayerButton className="ml-[8px] mt-[2px] size-6"><div className="size-[10px] bg-[#707070]" /></PlayerButton>
        <PlayerButton className="ml-[8px] mt-[2px] size-6"><svg viewBox="0 0 16 10" className="h-[10px] w-4" fill="currentColor"><path d="M14 0h2v10h-2zM0 0v10l7-5zM7 0v10l7-5z" /></svg></PlayerButton>
        <PlayerButton className="ml-[50px] mt-[2px] size-6"><svg viewBox="0 0 14 14" className="size-3.5" fill="none" stroke="currentColor" strokeWidth="2"><path d="M5 0v5H0M9 0v5h5M5 14V9H0M9 14V9h5" /></svg></PlayerButton>
        <PlayerButton className="ml-auto mt-[2px] size-6"><svg viewBox="0 0 16 6" className="h-1.5 w-4" fill="currentColor"><path d="M0 3l4-3v6zM16 3l-4-3v6zM5 2h2v2H5zM9 2h2v2H9zM3 2.500h10v1H3z" /></svg></PlayerButton>
        <svg viewBox="0 0 13 14" className="ml-[7px] mt-[15px] h-3.5 w-[13px]"><path d="M0 4h3l4-4v13L3 9.500H0z" fill="#666" /><path d="M8.500 4q2 3 0 5.500M10.500 2.500q3 4.500 0 8.500" stroke="#e08a2e" strokeWidth="1.400" fill="none" /></svg>
        <svg viewBox="0 0 75 23" className="ml-[8px] mt-[6px] h-[23px] w-[75px]">
          <path d="M1 21.500L45 8v14H2z" fill="#2fb02f" />
          <path d="M1.500 20.500L73.500 1v20.500H2z" fill="none" stroke="#666" strokeWidth="1.800" />
          <text x="9" y="9" fontSize="10.500" fill="#555">75%</text>
        </svg>
        <span className="ml-[18px] mr-[11px] mt-[7px] whitespace-nowrap">-00:09/01:06</span>
      </div>
    </div>
  );
}

export default function App() {
  return (
    <div className="relative flex h-[1079px] w-full flex-col overflow-hidden bg-black">
      <div className="flex h-[1049px] shrink-0">
        <LeftWindow />
        <div className="w-[2px] shrink-0 bg-linear-to-b from-[#34403c] via-[#4a4036] to-[#5a4636]" />
        <RightWindow />
      </div>
      <Taskbar />
      <Player />
      <div className="absolute left-[1886px] top-[1045px] flex h-[31px] w-[30px] items-center justify-center rounded-[5px] border border-[#5c6266] bg-[#2b3034]">
        <div className="size-3 rounded-full bg-linear-to-b from-[#8fc000] to-[#5f9400]" />
      </div>
      <svg viewBox="0 0 12 19" className="absolute left-[771px] top-[591px] h-[19px] w-3">
        <path d="M.5.9v14.600l3.400-3.300 2.400 5.600q1.200 1.100 2.400-.3L6.400 11.500h4.700z" fill="#000" stroke="#fff" />
      </svg>
    </div>
  );
}
